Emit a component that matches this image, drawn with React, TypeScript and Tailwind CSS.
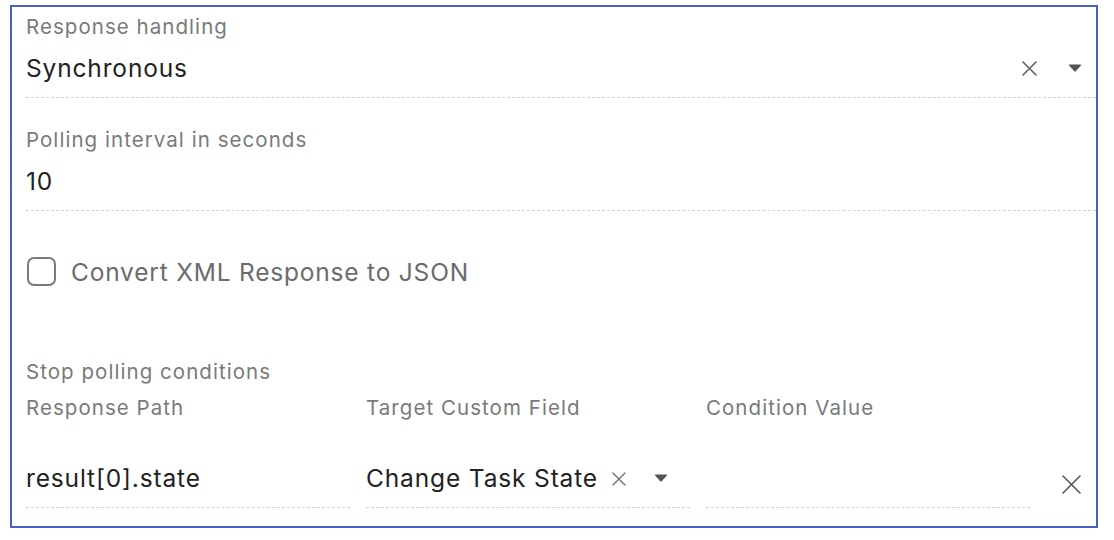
const font = { fontFamily: "Inter, 'Noto Sans', sans-serif" };

function Caret() {
  return (
    <svg width="14" height="8" viewBox="0 0 14 8" className="shrink-0">
      <path d="M1.5 1h11l-5.5 6z" fill="#555" stroke="#555" strokeWidth="1.2" strokeLinejoin="round" />
    </svg>
  );
}

function Cross({ size, color, stroke = 1.6, className = "" }: { size: number; color: string; stroke?: number; className?: string }) {
  return (
    <svg width={size} height={size} viewBox={`0 0 ${size} ${size}`} className={`shrink-0 ${className}`}>
      <path d={`M1 1L${size - 1} ${size - 1}M${size - 1} 1L1 ${size - 1}`} stroke={color} strokeWidth={stroke} strokeLinecap="round" />
    </svg>
  );
}

function Label({ children, className = "" }: { children: React.ReactNode; className?: string }) {
  return <div className={`text-[20.5px] leading-[24px] tracking-[1.05px] text-[#7a7a7a] ${className}`}>{children}</div>;
}

export default function App() {
  return (
    <div className="h-[540px] w-[1114px] bg-white pl-[10px] pt-[5px]" style={font}>
      <div className="flex h-[523px] w-[1088px] flex-col border-2 border-[#4a5fc3] pl-[14px]">
        {/* Response handling */}
        <Label className="mt-[8px]">Response handling</Label>
        <div className="flex h-[59px] items-center border-b border-dashed border-[#d2d2d2]">
          <span className="flex-1 text-[24.5px] leading-[28px] tracking-[0.85px] text-[#222]">Synchronous</span>
          <Cross size={15} color="#666" stroke={1.7} className="mr-[31px]" />
          <span className="mr-[14px]">
            <Caret />
          </span>
        </div>

        {/* Polling interval */}
        <Label className="mt-[30px]">Polling interval in seconds</Label>
        <div className="flex h-[59px] items-center border-b border-dashed border-[#d2d2d2]">
          <span className="text-[24.5px] leading-[28px] tracking-[0.85px] text-[#222]">10</span>
        </div>

        {/* Checkbox */}
        <label className="mt-[46px] flex items-center gap-[15px] pl-[1px]">
          <span className="h-[29px] w-[29px] rounded-[7px] border-2 border-[#7a7a7a]" />
          <span className="text-[24.5px] leading-[28px] tracking-[0.8px] text-[#6b6b6b]">Convert XML Response to JSON</span>
        </label>

        {/* Stop polling conditions */}
        <Label className="mt-[74px]">Stop polling conditions</Label>
        <div className="flex items-end">
          <div className="grid w-[1004px] grid-cols-3 gap-x-[16px]">
            <Label className="pt-[12px]">Response Path</Label>
            <Label className="pt-[12px]">Target Custom Field</Label>
            <Label className="pt-[12px]">Condition Value</Label>

            <div className="h-[88px] border-b border-dashed border-[#d2d2d2] pt-[44px] text-[24.5px] leading-[28px] tracking-[0.85px] text-[#222]">
              result[0].state
            </div>
            <div className="flex h-[88px] items-start border-b border-dashed border-[#d2d2d2] pt-[44px]">
              <span className="text-[24.5px] leading-[28px] tracking-[0.85px] text-[#222]">Change Task State</span>
              <Cross size={14} color="#777" stroke={1.5} className="ml-[14px] mt-[8px]" />
              <span className="ml-[28px] mt-[10px]">
                <Caret />
              </span>
            </div>
            <div className="h-[88px] border-b border-dashed border-[#d2d2d2]" />
          </div>
          <Cross size={19} color="#555" stroke={1.6} className="mb-[14px] ml-[32px]" />
        </div>
      </div>
    </div>
  );
}
